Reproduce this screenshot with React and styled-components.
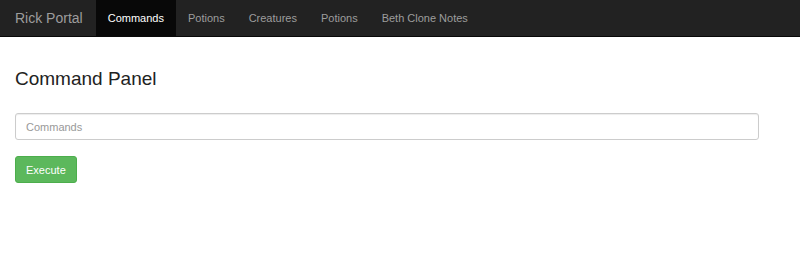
import React from 'react'
import styled, { createGlobalStyle } from 'styled-components'

const GlobalStyle = createGlobalStyle`
  * { box-sizing: border-box; }
  body {
    margin: 0;
    background: #fff;
    font-family: "Liberation Sans", Arial, sans-serif;
    color: #333;
  }
`

const NavBar = styled.nav`
  display: flex;
  align-items: stretch;
  height: 37px;
  background: #222;
  border-bottom: 1px solid #080808;
  padding-left: 15px;
`

const Brand = styled.a`
  display: flex;
  align-items: center;
  font-size: 14px;
  color: #9d9d9d;
  margin-right: 13px;
  text-decoration: none;
`

const NavItem = styled.a`
  display: flex;
  align-items: center;
  padding: 0 12px;
  font-size: 11px;
  text-decoration: none;
  color: ${p => (p.active ? '#fff' : '#9d9d9d')};
  background: ${p => (p.active ? '#080808' : 'transparent')};
`

const Container = styled.main`
  padding: 0 15px;
  display: flex;
  flex-direction: column;
`

const Title = styled.h1`
  font-size: 19px;
  font-weight: 400;
  color: #222;
  margin: 32px 0 24px;
  line-height: 20px;
`

const Input = styled.input`
  width: 744px;
  height: 27px;
  padding: 0 10px;
  font-family: inherit;
  font-size: 11px;
  border: 1px solid #ccc;
  border-radius: 3px;
  box-shadow: inset 0 1px 1px rgba(0, 0, 0, 0.075);
  color: #555;
  &::placeholder { color: #999; }
`

const Button = styled.button`
  align-self: flex-start;
  margin-top: 16px;
  height: 27px;
  padding: 0 10px;
  font-family: inherit;
  font-size: 11px;
  color: #fff;
  background: #5cb85c;
  border: 1px solid #4cae4c;
  border-radius: 3px;
`

export default function App() {
  return (
    <>
      <GlobalStyle />
      <NavBar>
        <Brand href="#">Rick Portal</Brand>
        <NavItem href="#" active>Commands</NavItem>
        <NavItem href="#">Potions</NavItem>
        <NavItem href="#">Creatures</NavItem>
        <NavItem href="#">Potions</NavItem>
        <NavItem href="#">Beth Clone Notes</NavItem>
      </NavBar>
      <Container>
        <Title>Command Panel</Title>
        <Input placeholder="Commands" />
        <Button>Execute</Button>
      </Container>
    </>
  )
}
